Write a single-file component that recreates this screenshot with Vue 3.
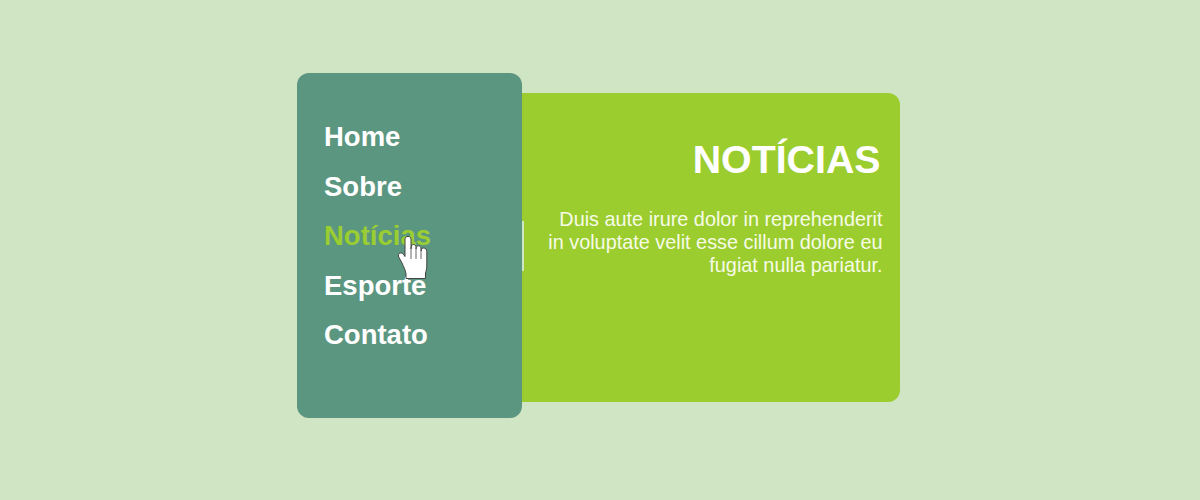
<script setup>
const items = ['Home', 'Sobre', 'Notícias', 'Esporte', 'Contato']
const active = 'Notícias'
</script>

<template>
  <div class="page">
    <div class="widget">
      <nav class="menu">
        <a
          v-for="item in items"
          :key="item"
          class="link"
          :class="{ active: item === active }"
        >{{ item }}</a>
        <svg class="cursor" viewBox="-1 -1 32 46" width="32" height="46" aria-hidden="true">
          <path
            d="M7 3C7 1.200 8.400.5 10 .5S13 1.200 13 3V13C13.300 9.800 14 8.500 15.500 8.500S18 9.500 18 11.500V13C18.300 10.800 19 9.800 20.500 9.800S23 11 23 13V15C23.300 13 24.200 12 25.800 12S28.800 13.300 28.800 15.500V30C28.800 33 28 35 27.500 37V42.500H8V38C7.500 34 5.500 30.500 4 27L1 21.500C-.2 19.500.6 17.300 2.200 17 4 16.600 5.500 18 7 20.500Z"
            fill="#fff"
            stroke="#444"
            stroke-width="1"
            stroke-linejoin="round"
          />
          <path d="M13 13V23M18 13V23M23 15V23" stroke="#666" stroke-width="1" fill="none" />
        </svg>
      </nav>
      <section class="panel">
        <span class="marker"></span>
        <h1>NOTÍCIAS</h1>
        <p>Duis aute irure dolor in reprehenderit in voluptate velit esse cillum dolore eu fugiat nulla pariatur.</p>
      </section>
    </div>
  </div>
</template>

<style scoped>
.page {
  height: 500px;
  display: flex;
  align-items: flex-start;
  justify-content: center;
  padding-top: 73px;
  box-sizing: border-box;
  background: #cfe5c3;
  font-family: "Liberation Sans", Arial, sans-serif;
}

.widget {
  display: flex;
  align-items: flex-start;
  width: 602.500px;
  margin-left: -3.500px;
}

.menu {
  position: relative;
  z-index: 1;
  flex: 0 0 225px;
  height: 345px;
  box-sizing: border-box;
  padding: 39px 27px 0;
  display: flex;
  flex-direction: column;
  background: #5b9680;
  border-radius: 12px;
}

.link {
  font-size: 27.500px;
  font-weight: 700;
  line-height: 49.500px;
  color: #fff;
}

.link.active {
  color: #9acd32;
}

.cursor {
  position: absolute;
  left: 100px;
  top: 162px;
}

.panel {
  position: relative;
  flex: 1;
  height: 309px;
  margin-top: 20px;
  box-sizing: border-box;
  padding: 43px 17px 0 20px;
  background: #9ccd2f;
  border-radius: 0 12px 12px 0;
  color: #fff;
  text-align: right;
}

.marker {
  position: absolute;
  left: 0;
  top: 128px;
  width: 2px;
  height: 50px;
  background: #cfe5c3;
}

h1 {
  margin: 0 2px 0 0;
  font-size: 39.300px;
  line-height: 46px;
  font-weight: 700;
}

p {
  margin: 26px 0 0;
  font-size: 19.850px;
  line-height: 23px;
  color: #f6fbe6;
}
</style>

<style>
body {
  margin: 0;
}
</style>
